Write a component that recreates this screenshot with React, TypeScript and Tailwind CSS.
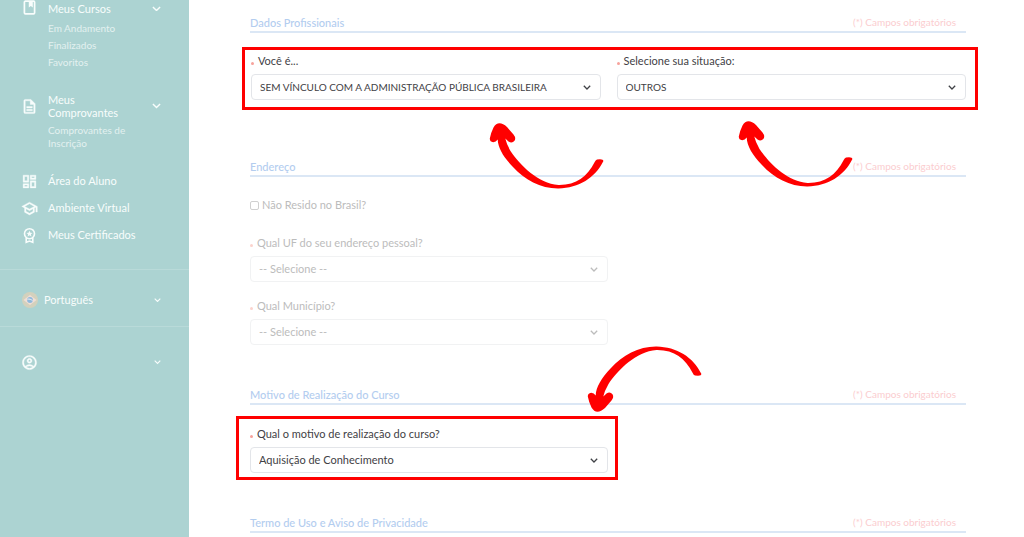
import { useId, useState } from "react";
import type { ReactNode } from "react";
import {
  MdOutlineAccountCircle,
  MdOutlineDashboard,
  MdOutlineDescription,
  MdOutlineSchool,
} from "react-icons/md";

const ICON = "size-[17px] stroke-[0.5px] [&_[fill=none]]:stroke-none";

function Chevron({ className }: { className: string }) {
  return (
    <svg viewBox="0 0 10 6" className={className} fill="none" stroke="currentColor" strokeWidth="1.6" aria-hidden="true">
      <path d="M1 1l4 4 4-4" />
    </svg>
  );
}

function BookIcon() {
  return (
    <svg viewBox="0 0 17 17" className="size-[17px]" aria-hidden="true">
      <rect x="3.4" y="1.2" width="10.2" height="12.6" rx="1" fill="none" stroke="currentColor" strokeWidth="1.7" />
      <path d="M7.800 1h4v6.500l-2-1.600-2 1.600z" fill="currentColor" />
    </svg>
  );
}

function AwardIcon() {
  return (
    <svg viewBox="0 0 17 17" className="size-[17px]" aria-hidden="true">
      <circle cx="8.500" cy="6.700" r="5" fill="none" stroke="currentColor" strokeWidth="1.600" />
      <path d="M8.500 3.700l.9 2 2.100.2-1.600 1.400.5 2.100-1.900-1.100-1.900 1.100.5-2.100-1.600-1.400 2.100-.2z" fill="currentColor" />
      <path d="M5.200 10.700v4.600l3.300-1.200 3.300 1.200v-4.600" fill="none" stroke="currentColor" strokeWidth="1.600" />
    </svg>
  );
}

function BrazilFlag() {
  return (
    <svg viewBox="0 0 16 16" className="size-4" aria-hidden="true">
      <circle cx="8" cy="8" r="8" fill="#d3d1bd" />
      <path d="M8 3l6.500 5L8 13 1.500 8z" fill="#f1ded6" />
      <circle cx="8" cy="8" r="2.900" fill="#8fb9dc" />
      <path d="M5.400 7.200c2-.4 3.800.1 5.200 1.600" stroke="#f3f3f3" strokeWidth="1" fill="none" />
    </svg>
  );
}

function NavGroup({ icon, title, items }: { icon: ReactNode; title: string; items: string[] }) {
  return (
    <li>
      <button type="button" className="flex w-full items-center pr-7 text-left">
        <span className="flex w-[27px] shrink-0">{icon}</span>
        <span className="w-20 leading-[13px]">{title}</span>
        <Chevron className="ml-auto w-[9px]" />
      </button>
      <ul className="mt-[5px] flex flex-col gap-1 pl-[27px] text-[10px] text-[#e3f1f0]">
        {items.map((item) => (
          <li key={item} className="w-24 leading-[13px]">
            <a href="#">{item}</a>
          </li>
        ))}
      </ul>
    </li>
  );
}

function NavLink({ icon, children }: { icon: ReactNode; children: string }) {
  return (
    <li>
      <a href="#" className="flex h-[27px] items-center">
        <span className="flex w-[27px]">{icon}</span>
        {children}
      </a>
    </li>
  );
}

function Sidebar() {
  return (
    <aside className="w-[189px] shrink-0 bg-[#acd3d2] text-[11px] text-[#f8fdfc]">
      <nav aria-label="Menu" className="pb-5 pl-[21px]">
        <ul className="flex flex-col gap-6">
          <NavGroup icon={<BookIcon />} title="Meus Cursos" items={["Em Andamento", "Finalizados", "Favoritos"]} />
          <NavGroup
            icon={<MdOutlineDescription className={ICON} />}
            title="Meus Comprovantes"
            items={["Comprovantes de Inscrição"]}
          />
        </ul>
        <ul className="mt-[18px]">
          <NavLink icon={<MdOutlineDashboard className={ICON} />}>Área do Aluno</NavLink>
          <NavLink icon={<MdOutlineSchool className={ICON} />}>Ambiente Virtual</NavLink>
          <NavLink icon={<AwardIcon />}>Meus Certificados</NavLink>
        </ul>
      </nav>
      <button type="button" className="flex h-[58px] w-full items-center gap-[6px] border-y border-[#b9dad9] pt-1 pr-7 pl-[22px]">
        <BrazilFlag />
        <span className="flex-1 text-left">Português</span>
        <Chevron className="w-[7px]" />
      </button>
      <button type="button" aria-label="Conta" className="flex h-[71px] w-full items-center justify-between pr-7 pl-[21px]">
        <MdOutlineAccountCircle className={ICON} />
        <Chevron className="w-[7px]" />
      </button>
    </aside>
  );
}

function SectionHeader({ children }: { children: string }) {
  return (
    <header className="flex items-end justify-between border-b-2 border-[#dbe7f5] pr-[10px] pb-[2px] leading-[13px]">
      <h2 className="font-medium text-[#b3cdef]">{children}</h2>
      <p className="text-[10px] text-[#fbcdcf]">(*) Campos obrigatórios</p>
    </header>
  );
}

function SelectField({ label, value, faded }: { label: string; value: string; faded?: boolean }) {
  const id = useId();
  const capitals = value === value.toUpperCase();
  return (
    <div className={`min-w-0 flex-1 ${faded ? "text-[#bcbcbc]" : "text-[#3f4145]"}`}>
      <label htmlFor={id} className="flex h-4 items-center gap-1">
        <span className={`mt-1 size-[3px] rounded-full ${faded ? "bg-[#fbd3cd]" : "bg-[#f7a29b]"}`} />
        {label}
      </label>
      <div className="relative mt-[5px]">
        <select
          id={id}
          className={`h-[26px] w-full appearance-none rounded-[4px] border bg-white px-2 ${capitals ? "text-[10px]" : ""} ${faded ? "border-[#f1f2f3]" : "border-[#e3e5e9]"}`}
        >
          <option>{value}</option>
        </select>
        <Chevron className="pointer-events-none absolute top-[11px] right-[10px] w-2" />
      </div>
    </div>
  );
}

function Highlight({ children, className }: { children: ReactNode; className: string }) {
  return <div className={`border-[3px] border-[#ff0000] ${className}`}>{children}</div>;
}

function Arrow({ className }: { className: string }) {
  return (
    <svg viewBox="0 0 114 66" className={`pointer-events-none absolute h-[66px] w-[114px] overflow-visible ${className}`} fill="#ff0000" aria-hidden="true">
      <path d="M7.700 16.500C8 25 13.500 34 22.500 43.500C34.500 57 51 65.700 68.500 65.500C89 65 105 55 113.300 38.300Q113.700 36.500 110 36.200L107 36.400Q105.500 37 104.700 39C97 54 86 62.300 68.500 62C48 60.500 30 42 20.500 28Q16.500 21 15.300 15.500L18.500 18.500Q22 20.800 24.500 17.800Q26.300 15 23.500 11.500L17 4Q13 .3 9.500 .3Q6 .3 3.500 4.500Q1 9.500 -.2 15.500Q-.3 18.700 3.200 19.200Q6 19 7.700 16.500Z" />
    </svg>
  );
}

export default function App() {
  const [abroad, setAbroad] = useState(false);
  return (
    <div className="flex h-screen overflow-hidden bg-white font-['Lato',sans-serif] text-[11px]">
      <Sidebar />
      <main className="relative min-w-0 flex-1 pt-4 pr-[58px] pl-[61px]">
        <section className="h-36">
          <SectionHeader>Dados Profissionais</SectionHeader>
          <Highlight className="mt-[14px] -mr-3 -ml-2 px-[6px] pt-[3px] pb-[7px]">
            <div className="flex gap-4 pr-[3px]">
              <SelectField label="Você é..." value="SEM VÍNCULO COM A ADMINISTRAÇÃO PÚBLICA BRASILEIRA" />
              <SelectField label="Selecione sua situação:" value="OUTROS" />
            </div>
          </Highlight>
        </section>
        <section className="h-[228px]">
          <SectionHeader>Endereço</SectionHeader>
          <label className="mt-5 flex h-4 items-center gap-[3px] text-[#bcbcbc]">
            <input
              type="checkbox"
              checked={abroad}
              onChange={(event) => setAbroad(event.target.checked)}
              className="size-[9px] appearance-none rounded-[2px] border border-[#d0d0d0] checked:bg-[#b3cdef]"
            />
            Não Resido no Brasil?
          </label>
          <div className="mt-[22px] flex w-1/2 flex-col gap-4">
            <SelectField faded label="Qual UF do seu endereço pessoal?" value="-- Selecione --" />
            <SelectField faded label="Qual Município?" value="-- Selecione --" />
          </div>
        </section>
        <section className="h-32">
          <SectionHeader>Motivo de Realização do Curso</SectionHeader>
          <Highlight className="mt-[11px] -ml-[14px] w-[382px] pt-[7px] pr-[7px] pb-1 pl-[11px]">
            <SelectField label="Qual o motivo de realização do curso?" value="Aquisição de Conhecimento" />
          </Highlight>
        </section>
        <SectionHeader>Termo de Uso e Aviso de Privacidade</SectionHeader>
        <Arrow className="top-[123px] left-[301px]" />
        <Arrow className="top-[121px] left-[550px]" />
        <Arrow className="top-[346px] left-[399px] -scale-y-100" />
      </main>
    </div>
  );
}
